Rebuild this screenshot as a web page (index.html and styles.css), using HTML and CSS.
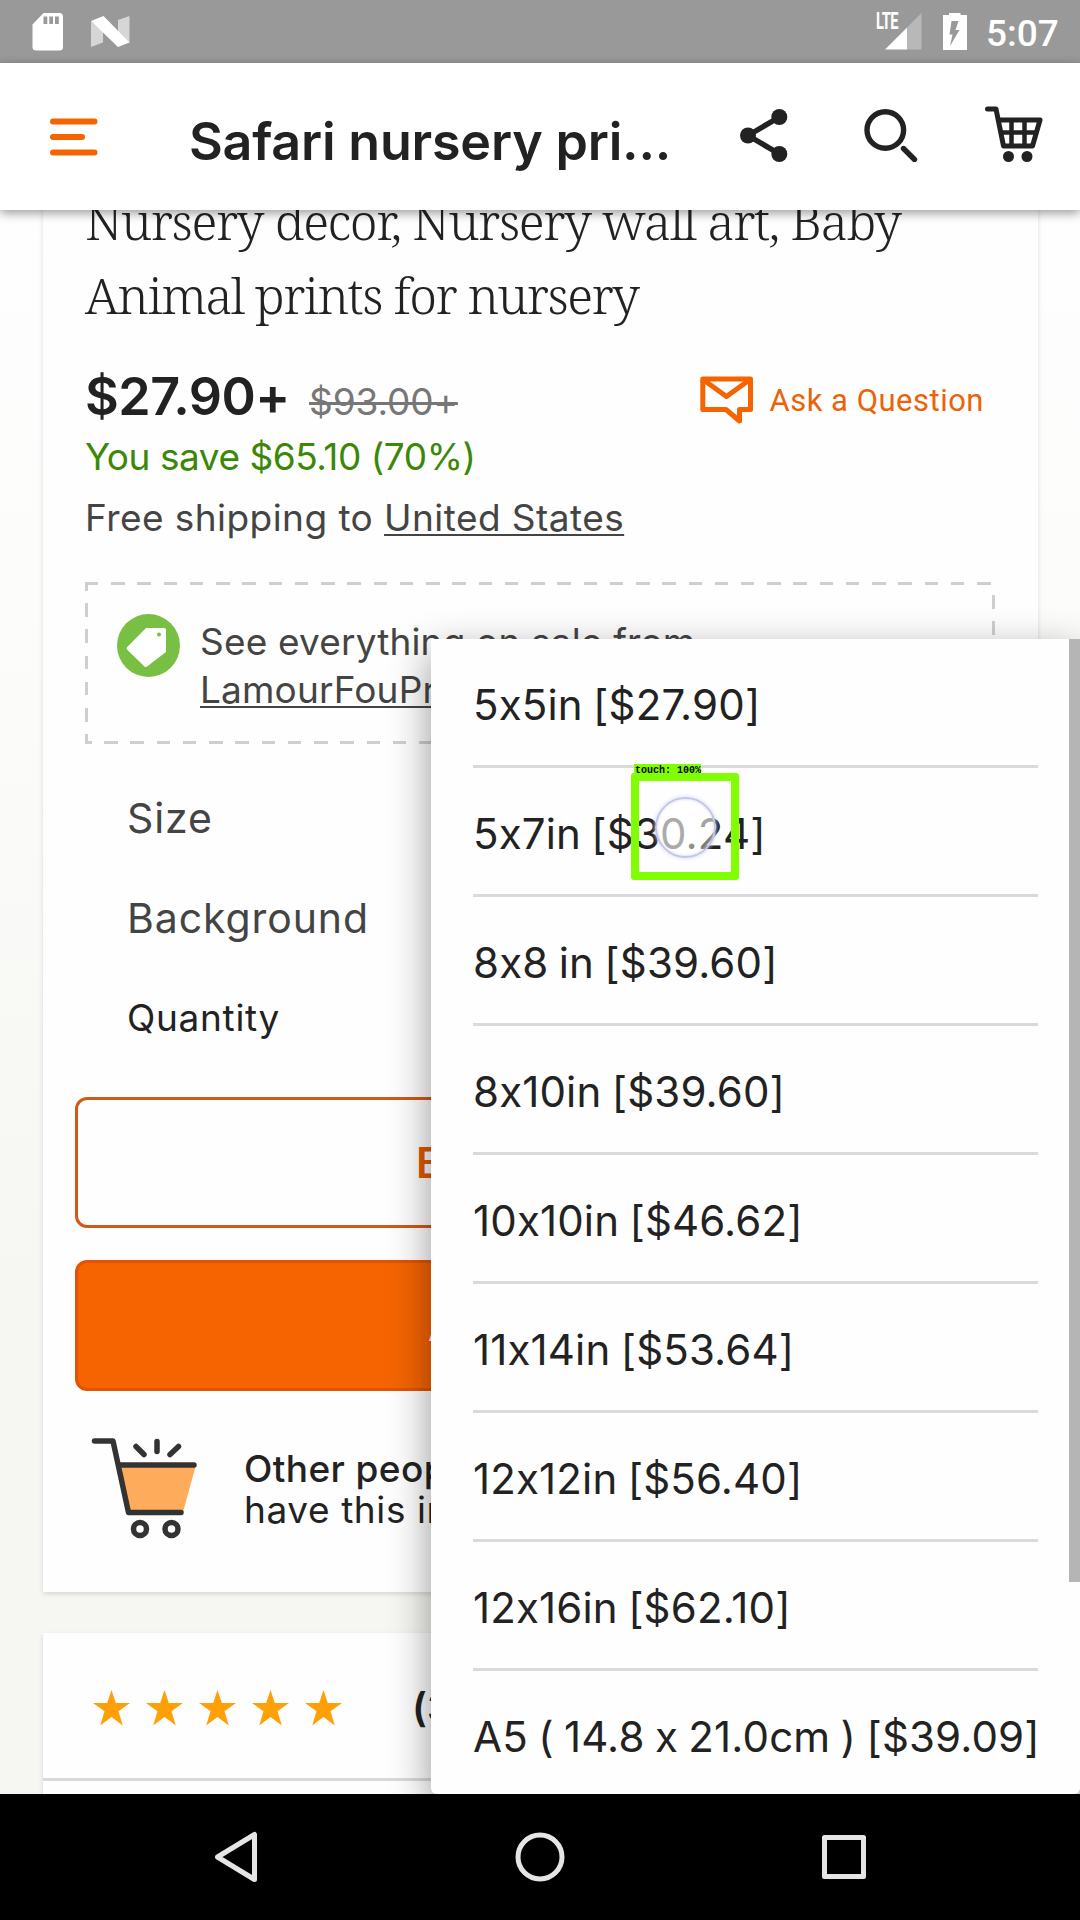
FILE: index.html
```html
<!DOCTYPE html>
<html lang="en">
<head>
<meta charset="utf-8">
<title>Safari nursery prints</title>
<link rel="stylesheet" href="styles.css">
</head>
<body>
<div class="screen">
  <header class="status">
    <svg class="status-left" width="100" height="38" viewBox="32 13 100 38">
      <path fill="#fff" fill-rule="evenodd" d="M43.500 13H59.500Q63 13 63 16.500V47Q63 50.500 59.500 50.500H36Q32.500 50.500 32.500 47V24.500ZM43.500 16.500V24H47.300V16.500ZM49.300 16.500V24H53V16.500ZM55 16.500V24H58.800V16.500Z"/>
      <path fill="#d6d6d6" d="M91 21L103 32V42.500L91 47ZM118 20L129.500 16V43L118 32Z"/>
      <path fill="#fff" d="M91 21L103.500 16L129.500 42.500L118 47Z"/>
    </svg>
    <div class="status-right">
      <span class="lte">LTE</span>
      <svg width="94" height="38" viewBox="876 13 94 38">
        <path fill="#b8b8b8" d="M921.500 13V49.500H907V27.500Z"/>
        <path fill="#fff" d="M885 49.500L907 27.500V49.500Z"/>
        <path fill="#fff" d="M943 15H949V12.500H960.500V15H967V50H943Z"/>
        <path fill="#999" d="M951.500 21H958.500L955.500 30H959.500L950 46L952.500 34.500H949.500Z"/>
      </svg>
      <span class="clock">5:07</span>
    </div>
  </header>

  <div class="appbar">
    <svg width="48" height="38" viewBox="0 0 48 38" stroke="#f56400" stroke-width="6" stroke-linecap="round">
      <path d="M3 3.500H44.500M3 19H32M3 34.500H44.500"/>
    </svg>
    <h1 class="title">Safari nursery pri...</h1>
    <svg class="actions" width="310" height="60" viewBox="736 102 310 60" fill="none" stroke="#222" stroke-linecap="round" stroke-linejoin="round">
      <path stroke-width="5.500" d="M779.500 117L748 135.500L779.500 154"/>
      <g fill="#222" stroke="none"><circle cx="779.300" cy="117" r="8"/><circle cx="748" cy="135.500" r="8"/><circle cx="779.300" cy="154" r="8"/></g>
      <circle cx="885.300" cy="130" r="18.300" stroke-width="5.400"/>
      <path stroke-width="5.400" d="M903.500 148.500L914.500 159.500"/>
      <path stroke-width="5" d="M987.500 109H996L1003.500 146H1032.500L1040 120H999"/>
      <path stroke-width="4.500" d="M1002 132.500H1035M1011.500 121V145M1024.500 121V145"/>
      <g fill="#222" stroke="none"><circle cx="1008.500" cy="156.500" r="5.500"/><circle cx="1027" cy="156.500" r="5.500"/></g>
    </svg>
  </div>

  <main class="page">
    <section class="card listing">
      <h2 class="name"><span class="wide">Nursery decor, Nursery wall art, Baby</span><br>Animal prints for nursery</h2>
      <div class="price-row">
        <span class="price">$27.90+</span>
        <span class="was">$93.00+</span>
        <a class="ask">
          <svg width="54" height="50" viewBox="0 0 54 50" fill="none" stroke="#f56400" stroke-width="5" stroke-linejoin="round">
            <path d="M2.800 3H50.500V33.500H39.500V45L26 33.500H2.800Z"/><path d="M5 5L26.500 20.500L48 5"/>
          </svg>
          <span>Ask a Question</span>
        </a>
      </div>
      <p class="save">You save $65.10 (70%)</p>
      <p class="ship">Free shipping to <span class="link">United States</span></p>
      <div class="sale">
        <svg width="63" height="63" viewBox="0 0 63 63">
          <circle cx="31.500" cy="31.500" r="31.500" fill="#78c043"/>
          <path fill="#fff" fill-rule="evenodd" d="M29 14H47Q49 14 49 16V38L30 52.500Q28.500 53.500 27.500 52.500L10 35.500Q9 34.500 10 33.200ZM42 18.500A2 2 0 1 0 42 22.500A2 2 0 1 0 42 18.500Z"/>
        </svg>
        <p>See everything on sale from<br><span class="link">LamourFouPrints</span></p>
      </div>
      <div class="options">
        <div>Size</div>
        <div>Background</div>
        <div class="qty">Quantity</div>
      </div>
      <button class="btn outline">Buy it now</button>
      <button class="btn solid">Add to cart</button>
      <div class="demand">
        <svg width="112" height="106" viewBox="88 1434 112 106" fill="none" stroke="#333" stroke-width="5.500" stroke-linecap="round" stroke-linejoin="round">
          <path fill="#ffab5c" stroke="none" d="M119 1465H196L183 1512H128Z"/>
          <path d="M94.500 1441H113L128.500 1512.500H181M120 1465H194"/>
          <path d="M136 1446.500L144 1454.500M157 1441.500V1451.500M178.500 1446.500L170 1454.500"/>
          <circle cx="140" cy="1529" r="6.500"/><circle cx="171.500" cy="1529" r="6.500"/>
        </svg>
        <p><b>Other people want this.</b><br>have this in their carts right now.</p>
      </div>
    </section>
    <section class="card reviews">
      <div class="rating">
        <svg width="250" height="36" viewBox="0 0 250 36" fill="#ffa008">
          <defs><path id="star" d="M18.500 0L22.800 13H37L25.500 21.300L29.800 35.500L18.500 27L7.200 35.500L11.500 21.300L0 13H14.200Z"/></defs>
          <use href="#star"/><use href="#star" x="53"/><use href="#star" x="106"/><use href="#star" x="159"/><use href="#star" x="212"/>
        </svg>
        <span>(3)</span>
      </div>
    </section>

    <div class="menu">
      <ul>
        <li>5x5in [$27.90]</li>
        <li>5x7in [$30.24]</li>
        <li>8x8 in [$39.60]</li>
        <li>8x10in [$39.60]</li>
        <li>10x10in [$46.62]</li>
        <li>11x14in [$53.64]</li>
        <li>12x12in [$56.40]</li>
        <li>12x16in [$62.10]</li>
        <li>A5 ( 14.8 x 21.0cm ) [$39.09]</li>
      </ul>
      <div class="scroll"></div>
    </div>
  </main>

  <footer class="nav">
    <svg width="652" height="52" viewBox="214 1831 652 52" fill="none" stroke="#e5e5e5" stroke-width="5" stroke-linejoin="round">
      <path d="M254.500 1834.500V1879.500L217.500 1857Z"/>
      <circle cx="540" cy="1857" r="22"/>
      <rect x="824.500" y="1837.500" width="39" height="39"/>
    </svg>
  </footer>

  <div class="touch"><span class="touch-label">touch: 100%</span><i></i></div>
</div>
</body>
</html>
```
FILE: styles.css
```css
* { box-sizing: border-box; margin: 0; padding: 0; }
body { font-family: Inter, "Liberation Sans", sans-serif; font-feature-settings: "calt" 0; color: #222; background: #fff; }
svg { display: block; flex: none; }
.screen { position: relative; width: 1080px; height: 1920px; display: flex; flex-direction: column; overflow: hidden; white-space: nowrap; }

.status { flex: none; height: 63px; background: #999; display: flex; justify-content: space-between; padding: 0 22px 0 32px; color: #fff; }
.status-left { margin-top: 13px; }
.status-right { position: relative; display: flex; align-items: flex-start; }
.status-right svg { margin-top: 13px; }
.lte { position: absolute; left: 0; top: 10px; font: 700 23px/24px Roboto, sans-serif; letter-spacing: -1px; transform: scaleX(.64); transform-origin: 0 0; }
.clock { font: 500 37px/68px Roboto, sans-serif; margin-left: 16px; width: 72px; }

.appbar { flex: none; position: relative; z-index: 2; height: 147px; background: #fff; display: flex; align-items: flex-start; padding-left: 50px; box-shadow: 0 3px 10px rgba(0,0,0,.4); }
.appbar svg:first-child { margin-top: 54.5px; }
.title { font-size: 52px; font-weight: 600; line-height: 60px; letter-spacing: -.2px; margin: 49px 0 0 91px; width: 547px; }
.actions { margin-top: 39px; }

.page { position: relative; flex: none; height: 1584px; overflow: hidden; background: linear-gradient(#fefefe, #fcfcfb 400px, #f6f6f2 1100px); }
.card { width: 995px; margin: 0 0 0 43px; background: #fefefe; box-shadow: 0 2px 5px rgba(0,0,0,.13); }
.listing { margin-top: -40px; height: 1422px; padding: 14px 43px 0 42px; }
.name { font: 300 50px/74px "Noto Serif", "Liberation Serif", serif; letter-spacing: -1.55px; }
.name .wide { letter-spacing: -1.33px; }
.price-row { display: flex; align-items: baseline; margin-top: 35px; height: 60px; }
.price { font-size: 52px; font-weight: 600; line-height: 60px; letter-spacing: -.5px; width: 224px; }
.was { font-size: 37px; line-height: 60px; letter-spacing: -.1px; color: #777; text-decoration: line-through; text-decoration-thickness: 3px; }
.ask { align-self: flex-start; display: flex; align-items: center; gap: 15px; height: 60px; margin: 4px -32px 0 auto; padding-right: 43px; font: 400 31px/60px Roboto, sans-serif; letter-spacing: .5px; color: #ec6206; }
.save { margin-top: 5px; font-size: 37px; line-height: 50px; letter-spacing: -.45px; color: #3b8706; }
.ship { margin-top: 11px; font-size: 37px; line-height: 50px; letter-spacing: .44px; color: #444; }
.link { text-decoration: underline; text-decoration-thickness: 2px; text-underline-offset: 3px; text-decoration-skip-ink: none; }

.sale {
  --dash: #cfcfcf 0 13.500px, transparent 13.500px 26.240px;
  display: flex; gap: 20px; height: 162px; margin-top: 39px; padding: 32px; color: #444;
  font-size: 37px; line-height: 48px; letter-spacing: .17px;
  background:
    repeating-linear-gradient(90deg, var(--dash)) 0 0 / 100% 3px no-repeat,
    repeating-linear-gradient(90deg, var(--dash)) -7px 159px / 120% 3px no-repeat,
    repeating-linear-gradient(180deg, var(--dash)) 0 -5px / 3px 104% no-repeat,
    repeating-linear-gradient(180deg, var(--dash)) 100% 13px / 3px 100% no-repeat;
}
.sale p { margin-top: 4px; }

.options { margin: 24px 0 0 42px; font-size: 41px; line-height: 100px; height: 299px; letter-spacing: .9px; color: #444; }
.options .qty { font-size: 37px; letter-spacing: .7px; color: #222; }

.btn { display: block; width: 930px; height: 131px; margin-left: -10px; padding-left: 338px; border-radius: 12px; text-align: left; font: 600 42px/124px Inter, sans-serif; }
.outline { margin-top: 30px; background: transparent; border: 3px solid #d05a17; color: #e05a00; }
.solid { margin-top: 32px; padding-left: 350px; background: #f56400; border: 3px solid #e25305; color: #fff; }

.demand { display: flex; margin: 43px 0 0 3px; gap: 44px; font-size: 37px; line-height: 41px; letter-spacing: .6px; }
.demand p { margin-top: 14px; }
.demand b { font-weight: 500; letter-spacing: .4px; }

.reviews { margin-top: 41px; height: 200px; }
.rating { height: 148px; border-bottom: 3px solid #d9d9d9; display: flex; align-items: center; padding: 4px 0 0 50px; font-size: 40px; font-weight: 600; }
.rating span { margin-left: 69px; }

.menu { position: absolute; left: 431px; top: 429px; width: 649px; height: 1155px; background: #fefefe; border-radius: 2px 2px 6px 6px; box-shadow: 0 14px 42px rgba(0,0,0,.42); display: flex; }
.menu ul { list-style: none; width: 565px; margin-left: 42px; }
.menu li { height: 129px; font-size: 42px; line-height: 132px; border-bottom: 3px solid #dadada; letter-spacing: .15px; word-spacing: -1.6px; }
.menu li:last-child { border: 0; height: 123px; }
.scroll { width: 11px; height: 943px; margin-left: auto; background: #b5b5b5; }

.nav { position: relative; flex: none; height: 126px; background: #000; display: flex; align-items: center; justify-content: center; }

.touch { position: absolute; left: 631px; top: 773px; width: 108px; height: 107px; border: 8px solid #80ff00; border-radius: 3px; display: flex; align-items: center; justify-content: center; }
.touch i { width: 61px; height: 61px; margin: 1px 0 0 1px; border: 2px solid #c3c7e6; border-radius: 50%; background: linear-gradient(135deg, rgba(255,255,255,.62) 60%, rgba(255,255,255,.2)); box-shadow: 0 0 4px #d3d6f0, inset 0 0 3px #d3d6f0; }
.touch-label { position: absolute; left: -5px; top: -17px; width: 67px; height: 13px; padding-left: 1px; background: #80ff00; color: #000; font: bold 10px/14px "Liberation Mono", monospace; }
```
